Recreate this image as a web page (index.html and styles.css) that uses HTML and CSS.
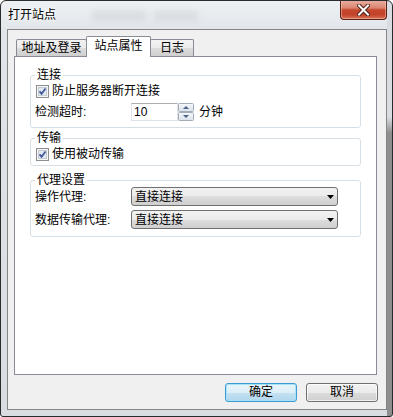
FILE: index.html
```html
<!DOCTYPE html>
<html lang="zh-CN">
<head>
    <meta charset="UTF-8">
    <title>打开站点</title>
    <link rel="stylesheet" href="styles.css">
</head>
<body>
    <div class="window">
        <div class="titlebar">
            <span class="title">打开站点</span>
            <span class="glass-blur"></span>
            <span class="glass-blur small"></span>
            <button class="close" type="button">
                <svg width="13" height="12" viewBox="0 0 13 12">
                    <path d="M2 1.5l9 9M11 1.5l-9 9" stroke="#4a1f17" stroke-width="4" stroke-linecap="square"/>
                    <path d="M2 1.5l9 9M11 1.5l-9 9" stroke="#fff" stroke-width="2" stroke-linecap="square"/>
                </svg>
            </button>
        </div>

        <div class="client">
            <div class="tabs">
                <div class="tab tab-login">地址及登录</div>
                <div class="tab tab-props active">站点属性</div>
                <div class="tab tab-log">日志</div>
            </div>

            <div class="panel">
                <fieldset class="group group-conn">
                    <legend>连接</legend>
                    <label class="row check-row">
                        <span class="checkbox">
                            <svg width="13" height="13" viewBox="0 0 13 13">
                                <rect x="0.5" y="0.5" width="12" height="12" fill="#f6f6f6" stroke="#8e8f8f"/>
                                <rect x="2.5" y="2.5" width="8" height="8" fill="#e2e8ef" stroke="#c3cbd5"/>
                                <path d="M3.5 6.3l2.1 2.4 3.9-5.2" fill="none" stroke="#43599a" stroke-width="1.8"/>
                            </svg>
                        </span>
                        防止服务器断开连接
                    </label>
                    <div class="row field-row">
                        <span class="label">检测超时:</span>
                        <span class="spin-input">10</span>
                        <svg class="spin-btns" width="16" height="18" viewBox="0 0 16 18">
                            <defs>
                                <linearGradient id="spinbg" x1="0" y1="0" x2="0" y2="1">
                                    <stop offset="0" stop-color="#f5f8fb"/>
                                    <stop offset="1" stop-color="#d9e1ea"/>
                                </linearGradient>
                            </defs>
                            <rect x="0.5" y="0.5" width="15" height="8" rx="1" fill="url(#spinbg)" stroke="#a3adb9"/>
                            <rect x="0.5" y="9.5" width="15" height="8" rx="1" fill="url(#spinbg)" stroke="#a3adb9"/>
                            <path d="M5 6h6L8 3z" fill="#4d6185"/>
                            <path d="M5 12h6L8 15z" fill="#4d6185"/>
                        </svg>
                        <span class="unit">分钟</span>
                    </div>
                </fieldset>

                <fieldset class="group group-transfer">
                    <legend>传输</legend>
                    <label class="row check-row">
                        <span class="checkbox">
                            <svg width="13" height="13" viewBox="0 0 13 13">
                                <rect x="0.5" y="0.5" width="12" height="12" fill="#f6f6f6" stroke="#8e8f8f"/>
                                <rect x="2.5" y="2.5" width="8" height="8" fill="#e2e8ef" stroke="#c3cbd5"/>
                                <path d="M3.5 6.3l2.1 2.4 3.9-5.2" fill="none" stroke="#43599a" stroke-width="1.8"/>
                            </svg>
                        </span>
                        使用被动传输
                    </label>
                </fieldset>

                <fieldset class="group group-proxy">
                    <legend>代理设置</legend>
                    <div class="row combo-row">
                        <span class="label">操作代理:</span>
                        <div class="combo">
                            <span>直接连接</span>
                            <svg width="7" height="4" viewBox="0 0 7 4"><path d="M0 0h7L3.5 4z" fill="#000"/></svg>
                        </div>
                    </div>
                    <div class="row combo-row">
                        <span class="label">数据传输代理:</span>
                        <div class="combo">
                            <span>直接连接</span>
                            <svg width="7" height="4" viewBox="0 0 7 4"><path d="M0 0h7L3.5 4z" fill="#000"/></svg>
                        </div>
                    </div>
                </fieldset>
            </div>

            <div class="buttons">
                <button class="btn default" type="button">确定</button>
                <button class="btn" type="button">取消</button>
            </div>
        </div>
    </div>
</body>
</html>
```

FILE: styles.css
```css
body {
    margin: 0;
    font-family: "Liberation Sans", "Noto Sans CJK SC", sans-serif;
    font-size: 12px;
    color: #000;
    background: #fff;
}
.window {
    width: 393px;
    height: 417px;
    box-sizing: border-box;
    border: 1px solid #2b2b2b;
    border-radius: 6px 6px 3px 3px;
    display: flex;
    flex-direction: column;
    background:
        linear-gradient(#d9dde1 0, #d9dde1 116px, #8e8e8e 132px) right top / 5px 100% no-repeat,
        linear-gradient(#eef1f4, #e1e5e9 30px, #d9dde1);
    overflow: hidden;
}
.titlebar {
    height: 28px;
    display: flex;
    align-items: flex-start;
}
.title {
    margin: 7px 0 0 7px;
    line-height: 14px;
    text-shadow: 0 0 6px #fff, 0 0 3px #fff;
}
.glass-blur {
    width: 54px;
    height: 11px;
    margin: 9px 0 0 36px;
    background: rgba(90, 95, 100, 0.09);
    filter: blur(3px);
}
.glass-blur.small {
    width: 44px;
    margin-left: 8px;
}
.close {
    margin: -1px 5px 0 auto;
    width: 47px;
    height: 20px;
    padding: 0;
    border: 1px solid #5a2015;
    border-top: none;
    border-radius: 0 0 4px 4px;
    background: linear-gradient(#e9b1a3 0%, #db8470 42%, #c5482d 52%, #c3432a 78%, #d8775d 100%);
    box-shadow: inset 0 0 0 1px rgba(255, 210, 200, 0.45);
    display: flex;
    align-items: center;
    justify-content: center;
}
.client {
    height: 381px;
    box-sizing: border-box;
    margin: 0 5px 6px 6px;
    border: 1px solid #858585;
    background: #f0f0f0;
    padding: 6px 9px 0 6px;
}
.tabs {
    display: flex;
    align-items: flex-end;
    height: 21px;
    margin: 0 0 -1px 2px;
    position: relative;
    z-index: 1;
}
.tab {
    box-sizing: border-box;
    height: 17px;
    margin-bottom: 1px;
    border: 1px solid #898c95;
    border-bottom: none;
    border-radius: 2px 2px 0 0;
    background: linear-gradient(#f2f2f2, #ebebeb 50%, #dddddd 50%, #cfcfcf);
    line-height: 16px;
    text-align: center;
}
.tab-login {
    width: 71px;
}
.tab-props {
    width: 65px;
    margin-left: -1px;
}
.tab-log {
    width: 44px;
    margin-left: -1px;
}
.tab.active {
    height: 21px;
    margin-bottom: 0;
    background: #fff;
    line-height: 18px;
    position: relative;
    z-index: 1;
}
.panel {
    height: 319px;
    box-sizing: border-box;
    border: 1px solid #898c95;
    background: #fff;
    padding: 0 15px;
    overflow: hidden;
}
.group {
    margin: 0;
    min-width: 0;
    border: 1px solid #d5dfe5;
    border-radius: 3px;
    padding: 2px 4px 6px;
}
.group legend {
    padding: 0 2px;
    line-height: 14px;
}
.group-conn {
    margin-top: 11px;
}
.group-transfer {
    margin-top: 3px;
    padding-bottom: 4px;
}
.group-proxy {
    margin-top: 7px;
    padding-top: 0;
    padding-bottom: 7px;
}
.row {
    display: flex;
    align-items: center;
}
.check-row {
    height: 14px;
    line-height: 14px;
}
.checkbox {
    display: flex;
    margin: 0 3px 0 1px;
}
.field-row {
    height: 18px;
    margin-top: 5px;
}
.label {
    width: 96px;
    flex-shrink: 0;
    line-height: 14px;
}
.spin-input {
    box-sizing: border-box;
    width: 47px;
    height: 18px;
    padding-left: 2px;
    border: 1px solid #dfe3e9;
    border-top-color: #abadb3;
    line-height: 16px;
}
.spin-btns {
    display: block;
}
.unit {
    margin-left: 5px;
    line-height: 14px;
}
.combo-row {
    height: 19px;
}
.combo-row + .combo-row {
    margin-top: 4px;
}
.combo {
    box-sizing: border-box;
    width: 207px;
    height: 19px;
    border: 1px solid #707070;
    border-radius: 3px;
    background: linear-gradient(#f2f2f2, #ebebeb 50%, #dddddd 50%, #cfcfcf);
    display: flex;
    align-items: center;
    justify-content: space-between;
    padding: 0 3px 0 3px;
    line-height: 14px;
}
.buttons {
    display: flex;
    justify-content: flex-end;
    gap: 9px;
    margin: 8px -1px 0 0;
}
.btn {
    width: 72px;
    height: 19px;
    padding: 0;
    font: inherit;
    line-height: 15px;
    color: #000;
    border: 1px solid #707070;
    border-radius: 3px;
    background: linear-gradient(#f2f2f2, #ebebeb 50%, #dddddd 50%, #cfcfcf);
    box-shadow: inset 0 0 0 1px rgba(255, 255, 255, 0.7);
}
.btn.default {
    border-color: #3c9bd2;
    background: linear-gradient(#eaf5fb, #dceef8 50%, #c5e2f3 50%, #b1d6ec);
    box-shadow: inset 0 0 0 1px #a8e1f8;
}
```
